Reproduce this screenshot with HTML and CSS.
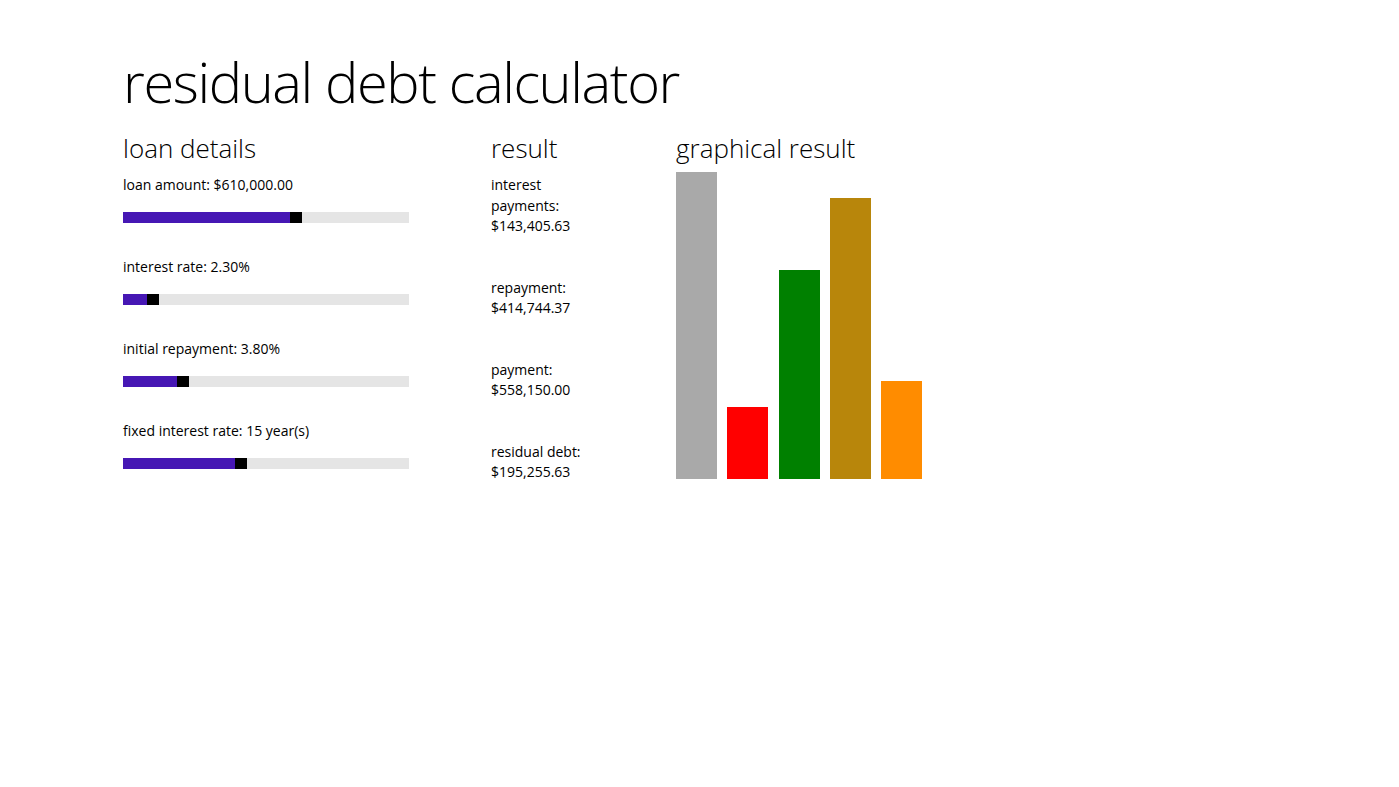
FILE: index.html
```html
<!DOCTYPE html>
<html lang="en">
<head>
<meta charset="utf-8">
<title>residual debt calculator</title>
<link rel="stylesheet" href="styles.css">
</head>
<body>
<div class="page">
  <h1 class="title">residual debt calculator</h1>
  <div class="columns">
    <section class="col col-loan">
      <h2 class="heading">loan details</h2>
      <div class="slider-group">
        <div class="label">loan amount: $610,000.00</div>
        <div class="track"><div class="fill" style="width:167px"></div><div class="thumb"></div></div>
      </div>
      <div class="slider-group">
        <div class="label">interest rate: 2.30%</div>
        <div class="track"><div class="fill" style="width:24px"></div><div class="thumb"></div></div>
      </div>
      <div class="slider-group">
        <div class="label">initial repayment: 3.80%</div>
        <div class="track"><div class="fill" style="width:54px"></div><div class="thumb"></div></div>
      </div>
      <div class="slider-group">
        <div class="label">fixed interest rate: 15 year(s)</div>
        <div class="track"><div class="fill" style="width:112px"></div><div class="thumb"></div></div>
      </div>
    </section>
    <section class="col col-result">
      <h2 class="heading">result</h2>
      <div class="result">interest<br>payments:<br>$143,405.63</div>
      <div class="result">repayment:<br>$414,744.37</div>
      <div class="result">payment:<br>$558,150.00</div>
      <div class="result">residual debt:<br>$195,255.63</div>
    </section>
    <section class="col col-graph">
      <h2 class="heading">graphical result</h2>
      <div class="chart">
        <div class="bar bar-gray" style="height:307px"></div>
        <div class="bar bar-red" style="height:72px"></div>
        <div class="bar bar-green" style="height:209px"></div>
        <div class="bar bar-gold" style="height:281px"></div>
        <div class="bar bar-orange" style="height:98px"></div>
      </div>
    </section>
  </div>
</div>
</body>
</html>
```
FILE: styles.css
```css
html, body {
  margin: 0;
  padding: 0;
  background: #ffffff;
}
body {
  font-family: "Open Sans", "Noto Sans", "Liberation Sans", sans-serif;
  color: #000000;
}
.page {
  padding: 49px 0 0 123px;
}
.title {
  margin: 0;
  font-size: 56px;
  font-weight: 300;
  line-height: 64px;
  letter-spacing: -1.4px;
  color: #000;
}
.columns {
  display: grid;
  grid-template-columns: 368px 185px 300px;
  margin-top: 17px;
}
.heading {
  margin: 0 0 9px 0;
  font-size: 26px;
  font-weight: 300;
  line-height: 36px;
  color: #000;
}
.label {
  font-size: 14px;
  line-height: 20px;
  color: #000;
}
.result {
  font-size: 14px;
  line-height: 20.5px;
  margin-bottom: 41px;
  color: #000;
}
.slider-group {
  padding-bottom: 34px;
}
.track {
  display: flex;
  width: 286px;
  height: 11px;
  margin-top: 17px;
  background: #e5e5e5;
}
.fill {
  background: #4617b4;
  height: 100%;
}
.thumb {
  width: 12px;
  height: 100%;
  background: #000;
}
.chart {
  display: flex;
  align-items: flex-end;
  gap: 10.3px;
  height: 307px;
  margin-top: -3px;
}
.bar {
  width: 41px;
}
.bar-gray { background: #a9a9a9; }
.bar-red { background: #ff0000; }
.bar-green { background: #008000; }
.bar-gold { background: #b8860b; }
.bar-orange { background: #ff8c00; }
```
